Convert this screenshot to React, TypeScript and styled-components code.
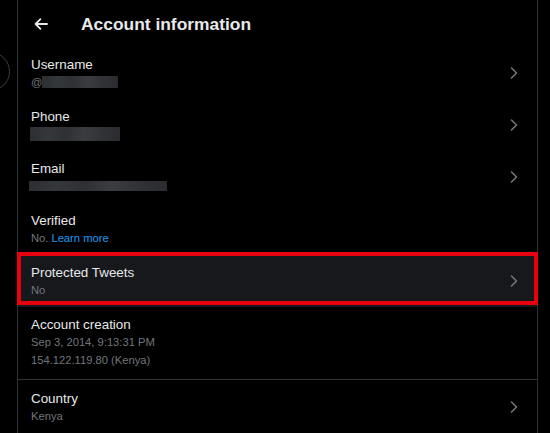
import React from "react";
import styled, { createGlobalStyle } from "styled-components";

const Global = createGlobalStyle`
  html, body { margin: 0; padding: 0; background: #000; }
  body { font-family: "Liberation Sans", Arial, sans-serif; color: #e7e9ea; }
  * { box-sizing: border-box; }
`;

const Page = styled.div`
  display: flex;
  width: 550px;
  height: 433px;
  background: #000;
  overflow: hidden;
`;

const Sidebar = styled.div`
  width: 17px;
  flex: none;
  overflow: hidden;
  display: flex;
  flex-direction: column;
`;

const AvatarRing = styled.div`
  width: 39px;
  height: 39px;
  margin-top: 52px;
  margin-left: -29px;
  border-radius: 50%;
  border: 1px solid #3a3d40;
  flex: none;
`;

const Main = styled.main`
  width: 521px;
  flex: none;
  border-left: 1px solid #2f3336;
  border-right: 1px solid #2f3336;
  display: flex;
  flex-direction: column;
`;

const Header = styled.header`
  height: 48px;
  display: flex;
  align-items: center;
  padding: 1px 0 0 16px;
  gap: 33px;
`;

const BackButton = styled.button`
  background: none;
  border: 0;
  padding: 0;
  display: flex;
  color: #e7e9ea;
`;

const Title = styled.h1`
  margin: 0;
  font-size: 17.4px;
  line-height: 24px;
  font-weight: 700;
  color: #e7e9ea;
`;

const Row = styled.div<{ $active?: boolean; $pt?: number; $pb?: number }>`
  position: relative;
  display: flex;
  align-items: center;
  justify-content: space-between;
  padding: ${(p) => p.$pt ?? 9}px 19px ${(p) => p.$pb ?? 9}px 13px;
  background: ${(p) => (p.$active ? "#16181c" : "transparent")};
  ${(p) =>
    p.$active &&
    `
    &::after {
      content: "";
      position: absolute;
      top: -3px;
      bottom: 2px;
      left: -1px;
      right: -1px;
      border: 4px solid #e8000f;
      pointer-events: none;
    }
  `}
`;

const Texts = styled.div`
  display: flex;
  flex-direction: column;
`;

const Label = styled.div`
  font-size: 13.4px;
  line-height: 18px;
  color: #e7e9ea;
`;

const Sub = styled.div<{ $mt?: number }>`
  font-size: 11.2px;
  line-height: 16px;
  min-height: 16px;
  color: #71767b;
  margin-top: ${(p) => p.$mt ?? 0}px;
  display: flex;
  align-items: center;
`;

const Link = styled.span`
  color: #1d9bf0;
  margin-left: 3px;
`;

const Redacted = styled.span<{ $w: number; $h: number; $ml?: number }>`
  display: inline-block;
  width: ${(p) => p.$w}px;
  height: ${(p) => p.$h}px;
  margin-left: ${(p) => p.$ml ?? 0}px;
  background: linear-gradient(
    90deg,
    #2c2e31 0%,
    #35383b 20%,
    #2e3033 40%,
    #3a3c3f 60%,
    #303235 80%,
    #2a2c2f 100%
  );
  filter: blur(0.6px);
`;

const Separator = styled.hr`
  margin: 0;
  border: 0;
  height: 1px;
  background: #2f3336;
`;

const Chevron = () => (
  <svg width="8" height="12" viewBox="0 0 8 12" fill="none">
    <polyline points="1.5,1 6.5,6 1.5,11" stroke="#71767b" strokeWidth="1.6" strokeLinecap="round" strokeLinejoin="round" />
  </svg>
);

const BackArrow = () => (
  <svg width="14" height="12" viewBox="0 0 14 12" fill="none">
    <path d="M13 6H1.6M6.4 1.2L1.6 6l4.8 4.8" stroke="#e7e9ea" strokeWidth="1.8" strokeLinecap="round" strokeLinejoin="round" />
  </svg>
);

export default function App() {
  return (
    <>
      <Global />
      <Page>
        <Sidebar>
          <AvatarRing />
        </Sidebar>
        <Main>
          <Header>
            <BackButton aria-label="Back">
              <BackArrow />
            </BackButton>
            <Title>Account information</Title>
          </Header>

          <Row>
            <Texts>
              <Label>Username</Label>
              <Sub>
                @<Redacted $w={76} $h={12} $ml={0} />
              </Sub>
            </Texts>
            <Chevron />
          </Row>

          <Row>
            <Texts>
              <Label>Phone</Label>
              <Sub>
                <Redacted $w={90} $h={14} $ml={-1} />
              </Sub>
            </Texts>
            <Chevron />
          </Row>

          <Row>
            <Texts>
              <Label>Email</Label>
              <Sub>
                <Redacted $w={138} $h={10} $ml={-2} />
              </Sub>
            </Texts>
            <Chevron />
          </Row>

          <Row>
            <Texts>
              <Label>Verified</Label>
              <Sub>
                No.<Link>Learn more</Link>
              </Sub>
            </Texts>
          </Row>

          <Row $active>
            <Texts>
              <Label>Protected Tweets</Label>
              <Sub>No</Sub>
            </Texts>
            <Chevron />
          </Row>

          <Row $pb={11}>
            <Texts>
              <Label>Account creation</Label>
              <Sub>Sep 3, 2014, 9:13:31 PM</Sub>
              <Sub $mt={2}>154.122.119.80 (Kenya)</Sub>
            </Texts>
          </Row>

          <Separator />

          <Row $pt={10}>
            <Texts>
              <Label>Country</Label>
              <Sub>Kenya</Sub>
            </Texts>
            <Chevron />
          </Row>
        </Main>
      </Page>
    </>
  );
}
